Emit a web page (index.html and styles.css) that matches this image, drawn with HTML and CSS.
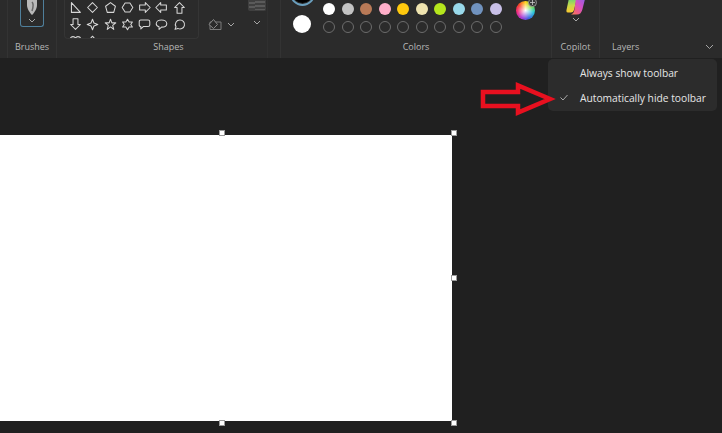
FILE: index.html
```html
<!DOCTYPE html>
<html lang="en">
<head>
    <meta charset="UTF-8">
    <title>Paint</title>
    <link rel="stylesheet" href="styles.css">
</head>
<body>
    <div class="toolbar">
        <div class="group brushes">
            <div class="group-body">
                <div class="brush-btn">
                    <svg class="brush-icon" width="12" height="15" viewBox="0 0 12 15"><path d="M1 0H11V5C11 9 8 13 6 15C4 13 1 9 1 5Z" fill="#b9b9b9"/><path d="M6 2C8 4 7 8 6 11" stroke="#666" stroke-width="1.5" fill="none"/></svg>
                    <svg class="chev" width="8" height="5" viewBox="0 0 8 5"><path d="M1 1L4 4L7 1"/></svg>
                </div>
            </div>
            <div class="label">Brushes</div>
        </div>

        <div class="group shapes">
            <div class="group-body">
                <div class="gallery">
                    <svg class="shape" viewBox="0 0 16 16"><path d="M3 2L14 14H3Z"/></svg>
                    <svg class="shape" viewBox="0 0 16 16"><path d="M8 2L14 8L8 14L2 8Z"/></svg>
                    <svg class="shape" viewBox="0 0 16 16"><path d="M8 2L14 6.5L12 14H4L2 6.5Z"/></svg>
                    <svg class="shape" viewBox="0 0 16 16"><path d="M5 2.500H11L14.500 8L11 13.500H5L1.500 8Z"/></svg>
                    <svg class="shape" viewBox="0 0 16 16"><path d="M2 5H9V2L15 8L9 14V11H2Z"/></svg>
                    <svg class="shape" viewBox="0 0 16 16"><path d="M14 5H7V2L1 8L7 14V11H14Z"/></svg>
                    <svg class="shape" viewBox="0 0 16 16"><path d="M5 15V8H2L8 2L14 8H11V15Z"/></svg>
                    <svg class="shape" viewBox="0 0 16 16"><path d="M5 1V8H2L8 14L14 8H11V1Z"/></svg>
                    <svg class="shape" viewBox="0 0 16 16"><path d="M8 1.500L9.800 6.200L14.500 8L9.800 9.800L8 14.500L6.200 9.800L1.500 8L6.200 6.200Z"/></svg>
                    <svg class="shape" viewBox="0 0 16 16"><path d="M8 1.500L9.700 6H14.500L10.700 9L12 14L8 11L4 14L5.300 9L1.500 6H6.300Z"/></svg>
                    <svg class="shape" viewBox="0 0 16 16"><path d="M8 1.500L10 5H14L12 8L14 11H10L8 14.500L6 11H2L4 8L2 5H6Z"/></svg>
                    <svg class="shape" viewBox="0 0 16 16"><path d="M3.500 2.500H12.500Q14.500 2.500 14.500 4.500V8.500Q14.500 10.500 12.500 10.500H6.500L3.500 13.500V10.500Q1.500 10.500 1.500 8.500V4.500Q1.500 2.500 3.500 2.500Z"/></svg>
                    <svg class="shape" viewBox="0 0 16 16"><path d="M8 2.500C11.500 2.500 14.500 4.300 14.500 7C14.500 9.700 11.500 11.200 8 11.200L5 14V10.800C3 10.200 1.500 8.800 1.500 7C1.500 4.300 4.500 2.500 8 2.500Z"/></svg>
                    <svg class="shape" viewBox="0 0 16 16"><path d="M8.500 2.500A5.500 5.500 0 1 1 6 12.800L2.500 14L3.700 10.800A5.500 5.500 0 0 1 8.500 2.500Z"/></svg>
                    <svg class="shape" viewBox="0 0 16 16"><path d="M8 14C4 11 1.500 8.500 1.500 5.500C1.500 3.500 3 2 5 2C6.300 2 7.400 2.700 8 3.800C8.600 2.700 9.700 2 11 2C13 2 14.500 3.500 14.500 5.500C14.500 8.500 12 11 8 14Z"/></svg>
                    <svg class="shape" viewBox="0 0 16 16"><path d="M8 1.500L13 7H10L14 14H2L6 7H3Z"/></svg>
                </div>
                <div class="fill-tool">
                    <svg width="14" height="11" viewBox="0 0 14 11"><path d="M2 3H13V10.500H2Z" fill="none" stroke="#7c7c7c"/><path d="M5.500 .5L9.500 5.500L5.500 9.500L1 5.500Z" fill="#2b2b2b" stroke="#8a8a8a"/></svg>
                    <svg class="chev" width="8" height="5" viewBox="0 0 8 5"><path d="M1 1L4 4L7 1"/></svg>
                </div>
                <div class="layer-tool">
                    <div class="thumb"></div>
                    <svg class="chev" width="8" height="5" viewBox="0 0 8 5"><path d="M1 1L4 4L7 1"/></svg>
                </div>
            </div>
            <div class="label">Shapes</div>
        </div>

        <div class="group colors">
            <div class="group-body">
                <div class="current">
                    <div class="current-ring"><div class="current-black"></div></div>
                    <div class="current-white"></div>
                </div>
                <div class="swatches">
                    <div class="swatch" style="background:#ffffff"></div>
                    <div class="swatch" style="background:#c3c3c3"></div>
                    <div class="swatch" style="background:#b97a57"></div>
                    <div class="swatch" style="background:#ffaec9"></div>
                    <div class="swatch" style="background:#ffc90e"></div>
                    <div class="swatch" style="background:#efe4b0"></div>
                    <div class="swatch" style="background:#b5e61d"></div>
                    <div class="swatch" style="background:#99d9ea"></div>
                    <div class="swatch" style="background:#7092be"></div>
                    <div class="swatch" style="background:#c8bfe7"></div>
                    <div class="swatch empty"></div>
                    <div class="swatch empty"></div>
                    <div class="swatch empty"></div>
                    <div class="swatch empty"></div>
                    <div class="swatch empty"></div>
                    <div class="swatch empty"></div>
                    <div class="swatch empty"></div>
                    <div class="swatch empty"></div>
                    <div class="swatch empty"></div>
                    <div class="swatch empty"></div>
                </div>
                <div class="wheel">
                    <svg class="wheel-plus" width="9" height="9" viewBox="0 0 9 9"><circle cx="4.500" cy="4.500" r="4" fill="#3a3a3a" stroke="#a8a8a8" stroke-width=".8"/><path d="M4.500 2V7M2 4.500H7" stroke="#c8c8c8" stroke-width=".8"/></svg>
                </div>
            </div>
            <div class="label">Colors</div>
        </div>

        <div class="group copilot">
            <div class="group-body">
                <svg class="copilot-icon" width="19" height="15" viewBox="0 0 19 15">
                    <defs>
                        <linearGradient id="copilot-a" x1="0" y1="0" x2="0" y2="1"><stop offset="0" stop-color="#5fd07a"/><stop offset=".5" stop-color="#c6d84a"/><stop offset="1" stop-color="#fbc92f"/></linearGradient>
                        <linearGradient id="copilot-b" x1="1" y1="0" x2="0" y2="1"><stop offset="0" stop-color="#8a62e6"/><stop offset=".4" stop-color="#d24fc8"/><stop offset=".75" stop-color="#f2607a"/><stop offset="1" stop-color="#f79050"/></linearGradient>
                    </defs>
                    <path d="M3 -2H11L8 10Q7.300 12.500 5 12.500H2Q0 12.500 .5 10Z" fill="url(#copilot-a)"/>
                    <path d="M10 -2H17Q19.500 -2 18.500 1L16.500 9Q15.300 14.500 11 14.500H5Q8 13.500 8.500 9Z" fill="url(#copilot-b)"/>
                </svg>
                <svg class="chev" width="8" height="5" viewBox="0 0 8 5"><path d="M1 1L4 4L7 1"/></svg>
            </div>
            <div class="label">Copilot</div>
        </div>

        <div class="group layers">
            <div class="group-body"></div>
            <div class="label-row">
                <div class="label">Layers</div>
                <svg class="chev wide" width="9" height="6" viewBox="0 0 9 6"><path d="M1 1L4.500 4.500L8 1"/></svg>
            </div>
        </div>
    </div>

    <div class="workspace">
        <div class="canvas">
            <span class="handle top-mid"></span>
            <span class="handle top-right"></span>
            <span class="handle mid-right"></span>
            <span class="handle bottom-mid"></span>
            <span class="handle bottom-right"></span>
        </div>
    </div>

    <div class="menu">
        <div class="menu-item"><span class="check"></span>Always show toolbar</div>
        <div class="menu-item">
            <span class="check"><svg width="8" height="7" viewBox="0 0 8 7"><path d="M.5 3.500L3 6L7.500 1" fill="none" stroke="#a8a8a8" stroke-width="1"/></svg></span>Automatically hide toolbar
        </div>
    </div>

    <svg class="callout" width="84" height="40" viewBox="0 0 84 40"><path d="M3 10H38V3.500L70 17L38 30.500V24H3Z" fill="none" stroke="#e8101f" stroke-width="4.500"/></svg>
</body>
</html>
```
FILE: styles.css
```css
html, body {
    height: 100%;
}

body {
    margin: 0;
    background-color: #202020;
    color: #e4e4e4;
    font-family: "Open Sans", "Liberation Sans", sans-serif;
    overflow: hidden;
}

.toolbar {
    display: flex;
    height: 58px;
    background-color: #2b2b2b;
    overflow: hidden;
}

.group {
    display: flex;
    flex-direction: column;
    box-sizing: border-box;
    border-right: 1px solid #333;
}

.group-body {
    height: 39px;
    display: flex;
}

.label {
    height: 15px;
    line-height: 15px;
    font-size: 9px;
    color: #b8b8b8;
    text-align: center;
}

.chev {
    flex-shrink: 0;
}

.chev path {
    fill: none;
    stroke: #a6a6a6;
    stroke-width: 1;
}

/* brushes */
.brushes {
    width: 57px;
    padding-left: 8px;
    background: linear-gradient(#333, #333) 7px 0 / 1px 100% no-repeat;
}

.brushes .label {
    padding-right: 10px;
    padding-left: 7px;
}

.brush-btn {
    box-sizing: border-box;
    width: 24px;
    height: 27px;
    margin-left: 12px;
    border: 1px solid #4f7f9b;
    border-top: none;
    border-radius: 0 0 3px 3px;
    display: flex;
    flex-direction: column;
    align-items: center;
}

.brush-icon {
    margin-bottom: 3px;
}

/* shapes */
.shapes {
    width: 224px;
    background: linear-gradient(#303030, #303030) 210px 0 / 1px 100% no-repeat;
}

.shapes .group-body {
    padding-left: 7px;
}

.gallery {
    box-sizing: border-box;
    width: 135px;
    height: 39px;
    padding: 0 2px;
    border: 1px solid #353535;
    border-top: none;
    border-radius: 0 0 4px 4px;
    display: grid;
    grid-template-columns: repeat(7, 17.3px);
    grid-auto-rows: 16px;
    row-gap: 1px;
    overflow: hidden;
    align-content: start;
}

.shape {
    width: 13px;
    height: 13px;
    margin: 0.5px 2px 0;
    align-self: start;
}

.shape path {
    fill: none;
    stroke: #d6d6d6;
    stroke-width: 1.300;
    stroke-linejoin: round;
}

.fill-tool {
    display: flex;
    align-items: center;
    gap: 5px;
    height: 12px;
    margin: 18px 0 0 9px;
}

.layer-tool {
    margin-left: 13px;
    display: flex;
    flex-direction: column;
    align-items: center;
    width: 18px;
}

.thumb {
    box-sizing: border-box;
    width: 18px;
    height: 11px;
    margin-bottom: 9px;
    background: repeating-linear-gradient(175deg, #3f3f3f 0 2px, #5a5a5a 2px 4px);
    border: 1px solid #404040;
    border-top: none;
    border-radius: 0 0 2px 2px;
}

/* colors */
.colors {
    width: 271px;
    padding-left: 9px;
}

.colors .label {
    padding-right: 9px;
}

.current {
    width: 24px;
    margin-top: -19px;
    display: flex;
    flex-direction: column;
    align-items: center;
    gap: 9px;
}

.current-ring {
    flex-shrink: 0;
    box-sizing: border-box;
    width: 25px;
    height: 25px;
    border: 2px solid #6a9fbe;
    border-radius: 50%;
    padding: 1px;
}

.current-black {
    height: 100%;
    background-color: #000;
    border-radius: 50%;
}

.current-white {
    flex-shrink: 0;
    width: 18px;
    height: 18px;
    background-color: #fff;
    border-radius: 50%;
}

.swatches {
    margin: 3px 0 0 9px;
    display: grid;
    grid-template-columns: repeat(10, 12px);
    grid-auto-rows: 12px;
    column-gap: 6.500px;
    row-gap: 6px;
    align-content: start;
}

.swatch {
    box-sizing: border-box;
    border-radius: 50%;
}

.swatch.empty {
    border: 1px solid #6c6c6c;
}

.wheel {
    position: relative;
    width: 19px;
    height: 19px;
    margin: 1px 0 0 14.500px;
    border-radius: 50%;
    background:
        radial-gradient(circle, #fff 0, rgba(255, 255, 255, 0) 62%),
        conic-gradient(#ffd21e, #7ddc2e, #28c7d8, #3a66e0, #a63ad8, #f02a80, #f5402a, #ffd21e);
}

.wheel-plus {
    position: absolute;
    top: -3px;
    right: -2px;
}

/* copilot and layers */
.copilot {
    width: 48px;
}

.copilot .group-body {
    flex-direction: column;
    align-items: center;
}

.copilot-icon {
    margin-bottom: 2px;
}

.layers {
    flex: 1;
    border-right: none;
    padding: 0 8px 0 12px;
}

.label-row {
    display: flex;
    justify-content: space-between;
    align-items: center;
}

/* canvas */
.workspace {
    padding-top: 77px;
    margin-left: -10px;
}

.canvas {
    position: relative;
    width: 462px;
    height: 286px;
    background-color: #fff;
}

.handle {
    position: absolute;
    box-sizing: border-box;
    width: 6px;
    height: 6px;
    background-color: #fff;
    border: 1px solid #222;
    outline: 1px solid #9a9a9a;
    outline-offset: -1px;
}

.top-mid { left: 229px; top: -5px; }
.top-right { right: -5px; top: -5px; }
.mid-right { right: -5px; top: 140px; }
.bottom-mid { left: 229px; bottom: -5px; }
.bottom-right { right: -5px; bottom: -5px; }

/* menu and annotation */
.callout {
    position: absolute;
    left: 480px;
    top: 82px;
}

.menu {
    position: absolute;
    left: 548px;
    top: 59px;
    width: 169px;
    height: 52px;
    box-sizing: border-box;
    padding-top: 2px;
    background-color: #2c2c2c;
    border-radius: 5px;
}

.menu-item {
    display: flex;
    align-items: center;
    height: 24.500px;
    font-size: 10.250px;
    color: #e6e6e6;
    white-space: nowrap;
}

.check {
    box-sizing: border-box;
    width: 32px;
    padding-left: 12px;
    display: flex;
    align-items: center;
}
```
